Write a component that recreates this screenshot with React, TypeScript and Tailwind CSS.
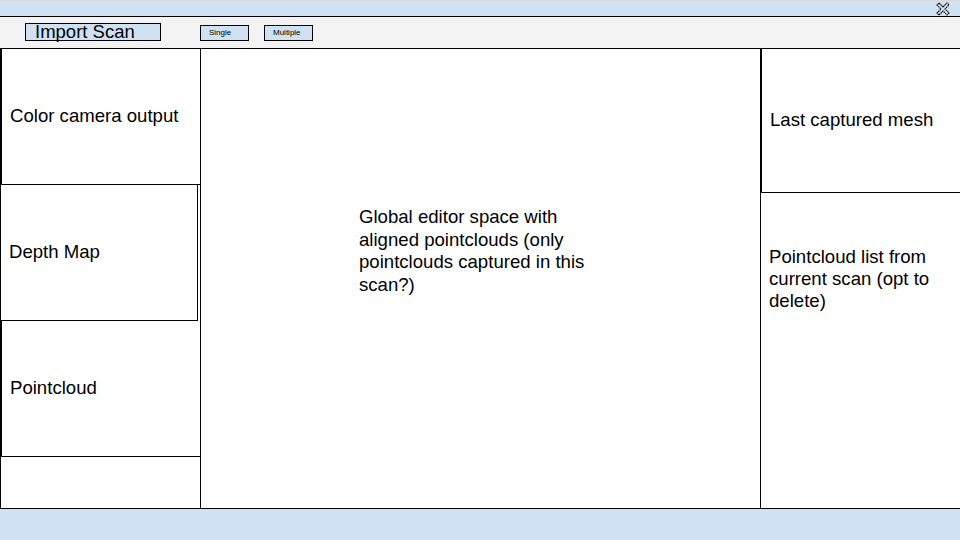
import React from 'react';

const CloseIcon: React.FC = () => (
  <svg width="14" height="14" viewBox="0 0 14 14" className="text-black">
    <path
      d="M3 1 L7 5 L11 1 L13 3 L9 7 L13 11 L11 13 L7 9 L3 13 L1 11 L5 7 L1 3 Z"
      fill="none"
      stroke="currentColor"
      strokeWidth="1.1"
      strokeDasharray="1.5 0.6"
    />
  </svg>
);

const Panel: React.FC<{ label: string; className?: string }> = ({ label, className = '' }) => (
  <div className={`flex items-center ${className}`}>
    <span>{label}</span>
  </div>
);

const App: React.FC = () => {
  return (
    <div
      className="w-[960px] h-[540px] flex flex-col bg-white text-black overflow-hidden"
      style={{ fontFamily: '"Liberation Sans", Arial, sans-serif' }}
    >
      {/* title bar */}
      <div className="h-[17px] shrink-0 bg-[#cfe2f3] border-b border-black border-t border-t-[#d8d8d8] flex items-center justify-end pr-[10px]">
        <CloseIcon />
      </div>

      {/* toolbar */}
      <div className="h-[32px] shrink-0 bg-[#f3f3f3] border-b border-black flex items-center">
        <button className="ml-[25px] -mt-[2px] w-[136px] h-[18px] bg-[#cfe2f3] border border-black text-[18.5px] leading-[14px] text-left pl-[9px]">
          Import Scan
        </button>
        <button className="ml-[39px] w-[49px] h-[16px] bg-[#cfe2f3] border border-black text-[8px] leading-[14px] text-left pl-[8px]">
          Single
        </button>
        <button className="ml-[15px] w-[49px] h-[16px] bg-[#cfe2f3] border border-black text-[8px] leading-[14px] text-left pl-[8px]">
          Multiple
        </button>
      </div>

      {/* main */}
      <div className="flex-1 flex text-[18.6px] leading-[22.5px]">
        <div className="w-[201px] shrink-0 border-r border-black flex flex-col">
          <Panel label="Color camera output" className="h-[136px] border-l-2 border-black border-b pl-[8px]" />
          <Panel label="Depth Map" className="h-[136px] border-l border-black border-b border-r pl-[8px] mr-[2px]" />
          <Panel label="Pointcloud" className="h-[136px] border-l-2 border-black border-b pl-[8px]" />
          <div className="flex-1 border-l border-black" />
        </div>

        <div className="flex-1 pl-[158px] pt-[157px]">
          <p className="w-[250px]">
            Global editor space with aligned pointclouds (only pointclouds captured in this scan?)
          </p>
        </div>

        <div className="w-[200px] shrink-0 border-l border-black flex flex-col">
          <Panel label="Last captured mesh" className="h-[144px] border-l border-black border-b pl-[8px]" />
          <div className="flex-1 pl-[8px] pt-[53px]">
            <p className="w-[180px] leading-[22px]">Pointcloud list from current scan (opt to delete)</p>
          </div>
        </div>
      </div>

      {/* status bar */}
      <div className="h-[32px] shrink-0 bg-[#cfe2f3] border-t border-black" />
    </div>
  );
};

export default App;
